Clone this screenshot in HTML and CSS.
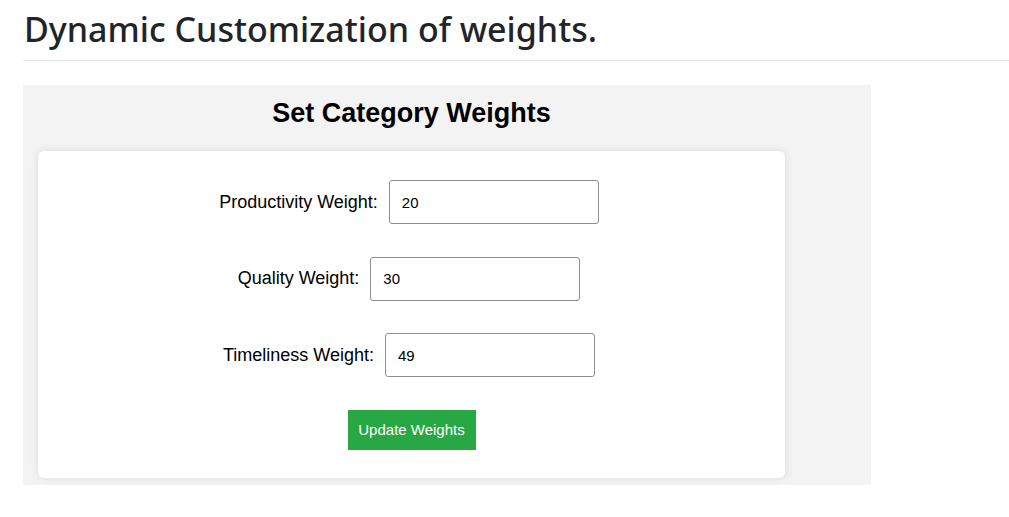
FILE: index.html
```html
<!DOCTYPE html>
<html>
<head>
<meta charset="utf-8">
<link rel="stylesheet" href="styles.css">
</head>
<body>
<header class="page-head">
  <h1 class="page-title">Dynamic Customization of weights.</h1>
</header>
<section class="panel">
  <div class="panel-inner">
    <h2 class="panel-title">Set Category Weights</h2>
    <form class="card">
      <div class="row">
        <label class="row-label">Productivity Weight:</label>
        <input class="row-input" type="text" value="20">
      </div>
      <div class="row">
        <label class="row-label">Quality Weight:</label>
        <input class="row-input" type="text" value="30">
      </div>
      <div class="row">
        <label class="row-label">Timeliness Weight:</label>
        <input class="row-input" type="text" value="49">
      </div>
      <button class="btn" type="button">Update Weights</button>
    </form>
  </div>
</section>
</body>
</html>
```
FILE: styles.css
```css
html, body {
  margin: 0;
  padding: 0;
  background: #ffffff;
}
body {
  padding-left: 23px;
  font-family: "Liberation Sans", Arial, sans-serif;
  color: #000;
}
.page-head {
  border-bottom: 1px solid #e3e5e8;
  padding-top: 6px;
  padding-bottom: 8px;
  margin-bottom: 24px;
}
.page-title {
  margin: 0;
  padding-left: 1px;
  font-family: "Noto Sans", "Open Sans", sans-serif;
  font-weight: 500;
  font-size: 34px;
  line-height: 46px;
  color: #212529;
}
.panel {
  width: 848px;
  background: #f3f3f3;
  padding: 0 0 7px 15px;
  box-sizing: border-box;
}
.panel-inner {
  width: 747px;
}
.panel-title {
  margin: 0;
  padding-top: 12px;
  padding-bottom: 21px;
  text-align: center;
  font-size: 27px;
  line-height: 33px;
  font-weight: bold;
}
.card {
  background: #fff;
  border-radius: 6px;
  box-shadow: 0 0 8px rgba(0, 0, 0, 0.1);
  padding: 29px 5px 28px 0;
  display: flex;
  flex-direction: column;
  align-items: center;
  gap: 32.5px;
}
.row {
  display: flex;
  align-items: center;
  gap: 11px;
}
.row-label {
  font-size: 18px;
}
.row-input {
  width: 210px;
  height: 44px;
  box-sizing: border-box;
  border: 1px solid #8f8f8f;
  border-radius: 3px;
  padding: 0 12px;
  font-family: "Liberation Sans", Arial, sans-serif;
  font-size: 15px;
  color: #000;
  background: #fff;
}
.btn {
  margin-left: 5px;
  width: 128px;
  height: 40px;
  border: none;
  background: #28a745;
  color: #fff;
  font-family: "Liberation Sans", Arial, sans-serif;
  font-size: 15px;
  padding: 0;
}
```
